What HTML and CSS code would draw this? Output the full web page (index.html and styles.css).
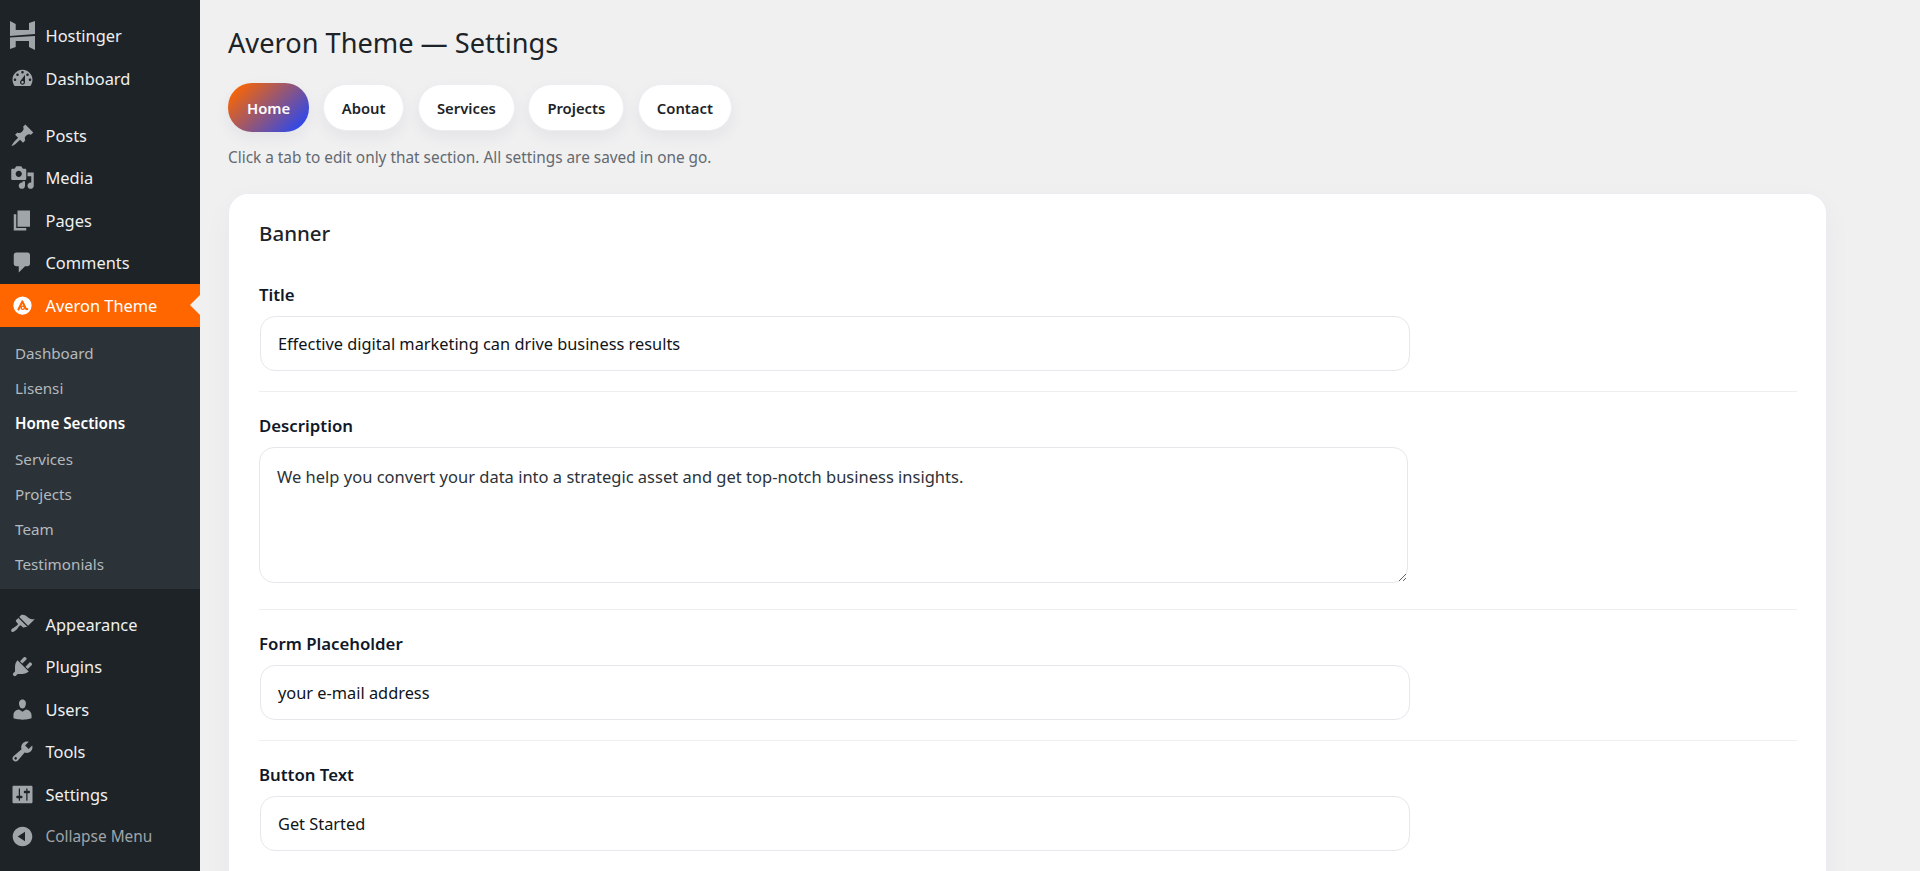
FILE: index.html
```html
<!DOCTYPE html>
<html lang="en">
<head>
<meta charset="utf-8">
<title>Averon Theme — Settings</title>
<link rel="stylesheet" href="styles.css">
</head>
<body>
<div class="layout">
  <nav class="sidebar">
    <a class="item"><svg class="ico ico-logo" viewBox="0 0 25 29"><path d="M0 0L5.700 3V9H19V2L25 0V13L0 15zM0 16.500L25 15V29L19 26V20H5.700V26L0 28z"/></svg><span>Hostinger</span></a>
    <a class="item"><svg class="ico" viewBox="0 0 20 20"><path d="M3.760 16h12.480c1.100-1.370 1.760-3.110 1.760-5 0-4.420-3.580-8-8-8s-8 3.580-8 8c0 1.890.66 3.630 1.760 5zM10 4c.55 0 1 .45 1 1s-.45 1-1 1-1-.45-1-1 .45-1 1-1zM6 6c.55 0 1 .45 1 1s-.45 1-1 1-1-.45-1-1 .45-1 1-1zm8 0c.55 0 1 .45 1 1s-.45 1-1 1-1-.45-1-1 .45-1 1-1zm-5.370 5.550L12 7v6c0 1.100-.9 2-2 2s-2-.9-2-2c0-.57.24-1.080.63-1.450zM4 10c.55 0 1 .45 1 1s-.45 1-1 1-1-.45-1-1 .45-1 1-1zm12 0c.55 0 1 .45 1 1s-.45 1-1 1-1-.45-1-1 .45-1 1-1zm-5 3c0-.55-.45-1-1-1s-1 .45-1 1 .45 1 1 1 1-.45 1-1z"/></svg><span>Dashboard</span></a>
    <div class="sep"></div>
    <a class="item"><svg class="ico" viewBox="0 0 20 20"><path d="M10.440 3.020l1.820-1.820 6.360 6.350-1.830 1.820c-1.050-.68-2.480-.57-3.410.36l-.75.75c-.92.93-1.040 2.350-.35 3.410l-1.830 1.820-2.410-2.410-2.800 2.790c-.42.42-3.380 2.710-3.800 2.290s1.860-3.390 2.280-3.810l2.790-2.790L4.100 9.360l1.830-1.820c1.050.69 2.480.57 3.400-.36l.75-.75c.93-.92 1.050-2.350.36-3.410z"/></svg><span>Posts</span></a>
    <a class="item"><svg class="ico" viewBox="0 0 20 20"><path d="M13 11V4c0-.55-.45-1-1-1h-1.670L9 1H5L3.670 3H2c-.55 0-1 .45-1 1v7c0 .55.45 1 1 1h10c.55 0 1-.45 1-1zM7 4.500c1.380 0 2.500 1.120 2.500 2.500S8.380 9.500 7 9.500 4.500 8.380 4.500 7 5.620 4.500 7 4.500zM14 6h5v10.500c0 1.380-1.120 2.500-2.500 2.500S14 17.880 14 16.500s1.120-2.500 2.500-2.500c.17 0 .34.020.5.050V9h-3V6zm-4 8.050V13h2v3.500c0 1.380-1.120 2.500-2.500 2.500S7 17.880 7 16.500 8.120 14 9.500 14c.17 0 .34.020.5.050z"/></svg><span>Media</span></a>
    <a class="item"><svg class="ico" viewBox="0 0 20 20"><path d="M6 15V2h10v13H6zm-1 1h8v2H3V5h2v11z"/></svg><span>Pages</span></a>
    <a class="item"><svg class="ico" viewBox="0 0 20 20"><path d="M5 2h9c1.100 0 2 .9 2 2v7c0 1.100-.9 2-2 2h-2l-5 5v-5H5c-1.100 0-2-.9-2-2V4c0-1.100.9-2 2-2z"/></svg><span>Comments</span></a>
    <a class="item current"><svg class="ico" viewBox="0 0 20 20"><circle class="disc" cx="10" cy="10" r="7.300"/><path class="glyph" d="M6.800 13.200L9.900 6.700L12.500 12.300Q12.800 13 13.800 12.900"/><circle class="glyph glyph-thin" cx="10.200" cy="11.800" r="1.300"/></svg><span>Averon Theme</span></a>
    <div class="submenu">
      <a class="subitem">Dashboard</a>
      <a class="subitem">Lisensi</a>
      <a class="subitem active">Home Sections</a>
      <a class="subitem">Services</a>
      <a class="subitem">Projects</a>
      <a class="subitem">Team</a>
      <a class="subitem">Testimonials</a>
    </div>
    <div class="sep sep-low"></div>
    <a class="item"><svg class="ico" viewBox="0 0 20 20"><path d="M14.480 11.060L7.410 3.990l1.500-1.500c.5-.56 2.300-.47 3.510.32 1.210.8 1.430 1.280 2.910 2.100 1.180.64 2.450 1.260 4.450.85zm-.71.71L6.700 4.700 4.930 6.470c-.39.39-.39 1.020 0 1.410l1.060 1.060c.39.39.39 1.030 0 1.420-.6.6-1.430 1.110-2.210 1.690-.35.26-.7.53-1.010.84C1.430 13.230.4 14.840 1.300 15.740c.9.9 2.500-.13 3.840-1.470.31-.31.58-.66.85-1.010.57-.78 1.080-1.610 1.690-2.210.39-.39 1.020-.39 1.410 0l1.060 1.060c.39.39 1.020.39 1.410 0z"/></svg><span>Appearance</span></a>
    <a class="item"><svg class="ico" viewBox="0 0 20 20"><path d="M13.110 4.360L9.870 7.600 8 5.730l3.240-3.240c.35-.34 1.050-.2 1.560.32.52.51.66 1.210.31 1.550zm-8 1.770l.91-1.120 9.010 9.010-1.190.84c-.71.71-2.630 1.160-3.820 1.160H6.140L4.900 17.260c-.59.59-1.540.59-2.120 0-.59-.58-.59-1.530 0-2.120l1.240-1.240v-3.880c0-1.130.4-3.190 1.090-3.890zm7.260 3.970l3.240-3.240c.34-.35 1.040-.21 1.550.31.52.51.66 1.210.31 1.550l-3.240 3.250z"/></svg><span>Plugins</span></a>
    <a class="item"><svg class="ico" viewBox="0 0 20 20"><path d="M10 9.250c-2.270 0-2.730-3.440-2.730-3.440C7 4.020 7.820 2 9.970 2c2.160 0 2.980 2.020 2.710 3.810 0 0-.41 3.440-2.680 3.440zm0 2.570L12.720 10c2.390 0 4.520 2.330 4.520 4.530v2.490s-3.650 1.130-7.240 1.130c-3.650 0-7.240-1.130-7.240-1.130v-2.490c0-2.250 1.940-4.480 4.470-4.480z"/></svg><span>Users</span></a>
    <a class="item"><svg class="ico" viewBox="0 0 20 20"><path d="M16.680 9.770c-1.340 1.340-3.300 1.670-4.950.99l-5.410 6.520c-.99.99-2.590.99-3.580 0s-.99-2.590 0-3.570l6.520-5.420c-.68-1.650-.35-3.610.99-4.950 1.280-1.280 3.120-1.620 4.720-1.060l-2.890 2.890 2.820 2.820 2.860-2.870c.53 1.580.18 3.390-1.080 4.650zM3.810 16.210c.4.39 1.040.39 1.430 0 .4-.4.4-1.040 0-1.430-.39-.4-1.030-.4-1.430 0-.39.39-.39 1.030 0 1.430z"/></svg><span>Tools</span></a>
    <a class="item"><svg class="ico" viewBox="0 0 20 20"><path d="M18 16V4c0-.55-.45-1-1-1H3c-.55 0-1 .45-1 1v12c0 .55.45 1 1 1h14c.55 0 1-.45 1-1zM8 11h1c.55 0 1 .45 1 1s-.45 1-1 1H8v1.500c0 .28-.22.5-.5.5s-.5-.22-.5-.5V13H6c-.55 0-1-.45-1-1s.45-1 1-1h1V5.500c0-.28.22-.5.5-.5s.5.22.5.5V11zm5-2h-1c-.55 0-1-.45-1-1s.45-1 1-1h1V5.500c0-.28.22-.5.5-.5s.5.22.5.5V7h1c.55 0 1 .45 1 1s-.45 1-1 1h-1v5.500c0 .28-.22.5-.5.5s-.5-.22-.5-.5V9z"/></svg><span>Settings</span></a>
    <a class="item collapse"><svg class="ico" viewBox="0 0 20 20"><path d="M10 2.160c4.330 0 7.840 3.510 7.840 7.840s-3.510 7.840-7.840 7.840S2.160 14.330 2.160 10 5.710 2.160 10 2.160zm2 11.720V6.120L6.180 9.970z"/></svg><span>Collapse Menu</span></a>
  </nav>
  <main class="main">
    <h1 class="title">Averon Theme — Settings</h1>
    <div class="tabs">
      <a class="tab tab-on">Home</a>
      <a class="tab">About</a>
      <a class="tab">Services</a>
      <a class="tab">Projects</a>
      <a class="tab">Contact</a>
    </div>
    <p class="hint">Click a tab to edit only that section. All settings are saved in one go.</p>
    <section class="card">
      <h2 class="card-title">Banner</h2>
      <div class="field">
        <label class="label">Title</label>
        <input class="input" type="text" value="Effective digital marketing can drive business results">
      </div>
      <div class="field">
        <label class="label">Description</label>
        <textarea class="textarea">We help you convert your data into a strategic asset and get top-notch business insights.</textarea>
      </div>
      <div class="field">
        <label class="label">Form Placeholder</label>
        <input class="input" type="text" value="your e-mail address">
      </div>
      <div class="field">
        <label class="label">Button Text</label>
        <input class="input" type="text" value="Get Started">
      </div>
    </section>
  </main>
</div>
</body>
</html>
```
FILE: styles.css
```css
* { box-sizing: border-box; }
html, body { height: 100%; }
body {
  margin: 0;
  height: 871px;
  overflow: hidden;
  background: #f0f0f1;
  font-family: "Noto Sans", "Open Sans", sans-serif;
  color: #1d2327;
}
.layout { display: flex; height: 871px; overflow: hidden; }

.sidebar {
  flex: 0 0 200px;
  width: 200px;
  background: #1d2327;
  padding-top: 14.5px;
  font-size: 16.4px;
}
.item {
  position: relative;
  display: flex;
  align-items: center;
  height: 42.5px;
  padding-left: 10px;
  color: #f0f0f1;
}
.item span { margin-left: 10.500px; }
.ico { width: 25px; height: 25px; fill: #a0a5aa; flex: none; }
.ico-logo { height: 29px; }
.sep { height: 14.700px; }
.sep-low { height: 14px; }

.current { background: #ff6600; color: #fff; }
.current::after {
  content: "";
  position: absolute;
  right: 0;
  top: 50%;
  margin-top: -10px;
  border: 10px solid transparent;
  border-right-color: #f0f0f1;
  border-left-width: 0;
}
.disc { fill: #fff; }
.glyph { fill: none; stroke: #ff6600; stroke-width: 1.700; stroke-linecap: round; stroke-linejoin: round; }
.glyph-thin { stroke-width: 1.100; }

.submenu { background: #2c3338; padding: 8.300px 0 7px; }
.subitem {
  display: flex;
  align-items: center;
  height: 35.300px;
  padding-left: 15px;
  font-size: 15.200px;
  color: #b4b9be;
}
.subitem.active { color: #fff; font-weight: 600; }
.collapse span { color: #a0a5aa; font-size: 15.400px; }

.main { flex: 1; min-width: 0; padding: 0 93px 0 28px; }
.title {
  margin: 0;
  padding-top: 24px;
  height: 83px;
  font-size: 27.200px;
  line-height: 38px;
  font-weight: 400;
  color: #1d2327;
}
.tabs { display: flex; align-items: center; gap: 13.500px; height: 49px; }
.tab {
  display: flex;
  align-items: center;
  height: 47px;
  padding: 0 18px;
  border-radius: 24px;
  background: #fff;
  border: 1px solid #eceef2;
  box-shadow: 0 6px 16px rgba(30, 40, 80, .06);
  font-size: 14.800px;
  font-weight: 600;
  color: #1d2327;
}
.tab-on {
  height: 49px;
  padding: 0 19px;
  border: 0;
  color: #fff;
  background: linear-gradient(135deg, #f2640c 12%, #2e48ea 90%);
}
.hint {
  margin: 16px 0 25px;
  font-size: 15.370px;
  line-height: 20px;
  color: #646970;
}
.card {
  background: #fff;
  border: 1px solid #e9edf2;
  border-bottom: 0;
  border-radius: 20px 20px 0 0;
  padding: 0 29px 0 30px;
  box-shadow: 0 10px 30px rgba(30, 40, 80, .04);
  height: 700px;
}
.card-title {
  margin: 0;
  padding-top: 24px;
  height: 87px;
  font-size: 20.500px;
  line-height: 30px;
  font-weight: 500;
  color: #1d2327;
}
.field {
  display: flex;
  flex-direction: column;
  align-items: flex-start;
  border-bottom: 1px solid #eceef0;
  padding-bottom: 20px;
  margin-bottom: 20px;
}
.field:last-child { border-bottom: 0; }
.label {
  display: block;
  height: 35px;
  padding-top: 2px;
  font-size: 16.800px;
  line-height: 24px;
  font-weight: 600;
  color: #101828;
}
.input {
  display: block;
  width: 1150px;
  height: 55px;
  margin: 0 0 0 1px;
  padding: 0 17px;
  border: 1px solid #e5e7eb;
  border-radius: 15px;
  background: #fff;
  outline: 0;
  font: 400 16.350px "Noto Sans", "Open Sans", sans-serif;
  color: #101418;
}
.textarea {
  display: block;
  width: 1149px;
  height: 136px;
  margin: 0 0 6px;
  padding: 16.500px 17px 14px;
  border: 1px solid #e5e7eb;
  border-radius: 15px;
  background: #fff;
  outline: 0;
  font: 400 16.500px/24px "Noto Sans", "Open Sans", sans-serif;
  color: #2c3338;
}
```
